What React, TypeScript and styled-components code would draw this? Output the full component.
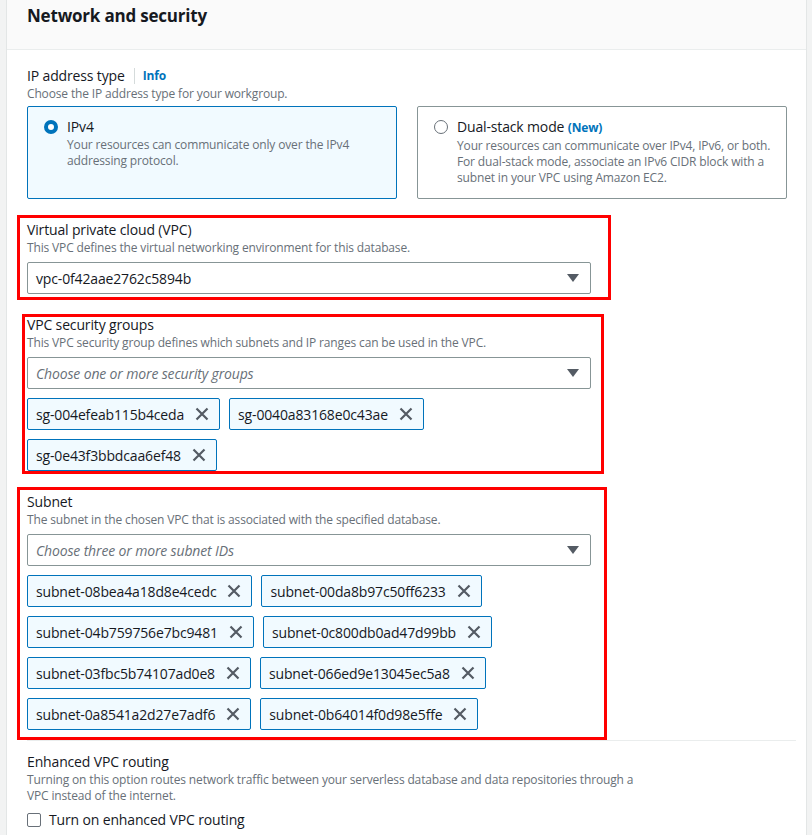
import React from "react";
import styled, { createGlobalStyle } from "styled-components";

const GlobalStyle = createGlobalStyle`
  html, body {
    margin: 0;
    padding: 0;
    background: #f2f3f3;
  }
  body {
    font-family: "Open Sans", "Noto Sans", Arial, sans-serif;
    letter-spacing: -0.15px;
    color: #16191f;
  }
`;

const SECURITY_GROUPS = [
  "sg-004efeab115b4ceda",
  "sg-0040a83168e0c43ae",
  "sg-0e43f3bbdcaa6ef48",
];

const SUBNETS = [
  "subnet-08bea4a18d8e4cedc",
  "subnet-00da8b97c50ff6233",
  "subnet-04b759756e7bc9481",
  "subnet-0c800db0ad47d99bb",
  "subnet-03fbc5b74107ad0e8",
  "subnet-066ed9e13045ec5a8",
  "subnet-0a8541a2d27e7adf6",
  "subnet-0b64014f0d98e5ffe",
];

const CloseIcon = () => (
  <svg width="14" height="14" viewBox="0 0 14 14" fill="none">
    <path d="M1.5 1.5l11 11M12.5 1.5l-11 11" stroke="#545b64" strokeWidth="2.2" />
  </svg>
);

const Caret = () => (
  <svg width="14" height="10" viewBox="0 0 14 10">
    <path d="M1 1h12L7 9z" fill="#545b64" />
  </svg>
);

interface TokenListProps {
  items: string[];
}
const TokenList = ({ items }: TokenListProps) => (
  <Tokens>
    {items.map((item) => (
      <Token key={item}>
        <span>{item}</span>
        <TokenDismiss>
          <CloseIcon />
        </TokenDismiss>
      </Token>
    ))}
  </Tokens>
);

const App = () => {
  return (
    <>
      <GlobalStyle />
      <Page>
        <Card>
          <CardHeader>
            <Title>Network and security</Title>
          </CardHeader>
          <CardBody>
            <Field>
              <LabelRow>
                <Label>IP address type</Label>
                <InfoLink>Info</InfoLink>
              </LabelRow>
              <Description>Choose the IP address type for your workgroup.</Description>
              <Tiles>
                <Tile $selected>
                  <Radio $checked />
                  <TileText>
                    <TileTitle>IPv4</TileTitle>
                    <TileDescription>
                      Your resources can communicate only over the IPv4
                      <br />
                      addressing protocol.
                    </TileDescription>
                  </TileText>
                </Tile>
                <Tile>
                  <Radio />
                  <TileText>
                    <TileTitle>
                      Dual-stack mode <NewBadge>(New)</NewBadge>
                    </TileTitle>
                    <TileDescription>
                      Your resources can communicate over IPv4, IPv6, or both.
                      <br />
                      For dual-stack mode, associate an IPv6 CIDR block with a
                      <br />
                      subnet in your VPC using Amazon EC2.
                    </TileDescription>
                  </TileText>
                </Tile>
              </Tiles>
            </Field>

            <Highlight $top={5} $right={20} $bottom={6} $left={10}>
              <Field>
                <Label>Virtual private cloud (VPC)</Label>
                <Description>
                  This VPC defines the virtual networking environment for this database.
                </Description>
                <Select>
                  <SelectValue>vpc-0f42aae2762c5894b</SelectValue>
                  <Caret />
                </Select>
              </Field>
            </Highlight>

            <Highlight $top={1} $right={13} $bottom={3} $left={5}>
              <Field>
                <Label>VPC security groups</Label>
                <Description>
                  This VPC security group defines which subnets and IP ranges can be used in the VPC.
                </Description>
                <Select>
                  <SelectValue $placeholder>Choose one or more security groups</SelectValue>
                  <Caret />
                </Select>
                <TokenList items={SECURITY_GROUPS} />
              </Field>
            </Highlight>

            <Highlight $top={5} $right={16} $bottom={10} $left={10}>
              <Field>
                <Label>Subnet</Label>
                <Description>
                  The subnet in the chosen VPC that is associated with the specified database.
                </Description>
                <Select>
                  <SelectValue $placeholder>Choose three or more subnet IDs</SelectValue>
                  <Caret />
                </Select>
                <TokenList items={SUBNETS} />
              </Field>
            </Highlight>

            <Divider />

            <Field>
              <Label>Enhanced VPC routing</Label>
              <Description>
                Turning on this option routes network traffic between your serverless database and data repositories through a
                <br />
                VPC instead of the internet.
              </Description>
              <CheckRow>
                <Checkbox />
                <CheckLabel>Turn on enhanced VPC routing</CheckLabel>
              </CheckRow>
            </Field>
          </CardBody>
        </Card>
      </Page>
    </>
  );
};

export default App;

const Page = styled.div`
  min-height: 835px;
  padding-left: 6px;
  width: 812px;
  box-sizing: border-box;
`;

const Card = styled.div`
  width: 801px;
  min-height: 835px;
  background: #ffffff;
  border-left: 1px solid #e3e6e6;
  border-right: 1px solid #e3e6e6;
  box-sizing: border-box;
`;

const CardHeader = styled.div`
  height: 50px;
  background: #fafafa;
  border-bottom: 1px solid #eaeded;
  padding: 4px 20px 0;
  box-sizing: border-box;
`;

const Title = styled.h2`
  margin: 0;
  font-size: 17px;
  line-height: 24px;
  font-weight: 700;
  letter-spacing: -0.2px;
  color: #16191f;
`;

const CardBody = styled.div`
  display: flex;
  flex-direction: column;
  gap: 21px;
  padding: 16px 8px 0 20px;
`;

const Field = styled.div`
  display: flex;
  flex-direction: column;
  width: 564px;
`;

const LabelRow = styled.div`
  display: flex;
  align-items: center;
`;

const Label = styled.div`
  font-size: 14px;
  line-height: 20px;
  color: #16191f;
  white-space: nowrap;
`;

const InfoLink = styled.a`
  font-size: 12px;
  font-weight: 700;
  color: #0073bb;
  margin-left: 9px;
  padding-left: 8px;
  line-height: 16px;
  border-left: 1px solid #d5dbdb;
`;

const Description = styled.div`
  font-size: 12px;
  line-height: 16px;
  color: #687078;
  white-space: nowrap;
`;

const Tiles = styled.div`
  display: grid;
  grid-template-columns: 370px 370px;
  gap: 20px;
  margin-top: 4px;
`;

const Tile = styled.div<{ $selected?: boolean }>`
  display: flex;
  gap: 9px;
  min-height: 92px;
  box-sizing: border-box;
  padding: 10px 16px 12px 16px;
  border: 1px solid ${(p) => (p.$selected ? "#0073bb" : "#879596")};
  border-radius: 2px;
  background: ${(p) => (p.$selected ? "#f1faff" : "#ffffff")};
`;

const Radio = styled.span<{ $checked?: boolean }>`
  flex: none;
  width: 14px;
  height: 14px;
  margin-top: 3px;
  border-radius: 50%;
  box-sizing: border-box;
  background: #ffffff;
  border: ${(p) => (p.$checked ? "4px solid #0073bb" : "1.5px solid #687078")};
`;

const TileText = styled.div`
  display: flex;
  flex-direction: column;
`;

const TileTitle = styled.div`
  font-size: 14px;
  line-height: 20px;
  color: #16191f;
`;

const NewBadge = styled.span`
  font-size: 12px;
  font-weight: 700;
  color: #0073bb;
`;

const TileDescription = styled.div`
  font-size: 12px;
  line-height: 16px;
  color: #687078;
  white-space: nowrap;
`;

// red annotation frame; offsets are the distance from the field edge to the outer frame edge
const Highlight = styled.div<{
  $top: number;
  $right: number;
  $bottom: number;
  $left: number;
}>`
  border: 3px solid #ff0000;
  align-self: flex-start;
  margin: ${(p) => `-${p.$top}px 0 -${p.$bottom}px -${p.$left}px`};
  padding: ${(p) =>
    `${Math.max(0, p.$top - 3)}px ${p.$right - 3}px ${p.$bottom - 3}px ${p.$left - 3}px`};

  & > * {
    margin-top: ${(p) => Math.min(0, p.$top - 3)}px;
  }
`;

const Select = styled.div`
  display: flex;
  align-items: center;
  justify-content: space-between;
  height: 32px;
  margin-top: 6px;
  padding: 0 10px 0 8px;
  box-sizing: border-box;
  border: 1px solid #879596;
  border-radius: 2px;
  background: #ffffff;
`;

const SelectValue = styled.span<{ $placeholder?: boolean }>`
  font-size: 14px;
  color: ${(p) => (p.$placeholder ? "#687078" : "#16191f")};
  font-style: ${(p) => (p.$placeholder ? "italic" : "normal")};
`;

const Tokens = styled.div`
  display: flex;
  flex-wrap: wrap;
  gap: 9px;
  margin-top: 9px;
`;

const Token = styled.div`
  display: flex;
  align-items: center;
  gap: 11px;
  height: 32px;
  box-sizing: border-box;
  padding: 0 10px 0 8px;
  border: 1px solid #0073bb;
  border-radius: 2px;
  background: #f1faff;
  font-size: 14px;
  color: #16191f;
`;

const TokenDismiss = styled.span`
  display: flex;
  align-items: center;
`;

const Divider = styled.div`
  height: 1px;
  width: 769px;
  background: #eaeded;
  margin: -11px 0 -10px;
`;

const CheckRow = styled.div`
  display: flex;
  align-items: center;
  gap: 8px;
  margin-top: 6px;
`;

const Checkbox = styled.span`
  width: 14px;
  height: 14px;
  box-sizing: border-box;
  border: 1px solid #687078;
  border-radius: 2px;
  background: #ffffff;
`;

const CheckLabel = styled.span`
  font-size: 14px;
  line-height: 20px;
  color: #16191f;
`;
